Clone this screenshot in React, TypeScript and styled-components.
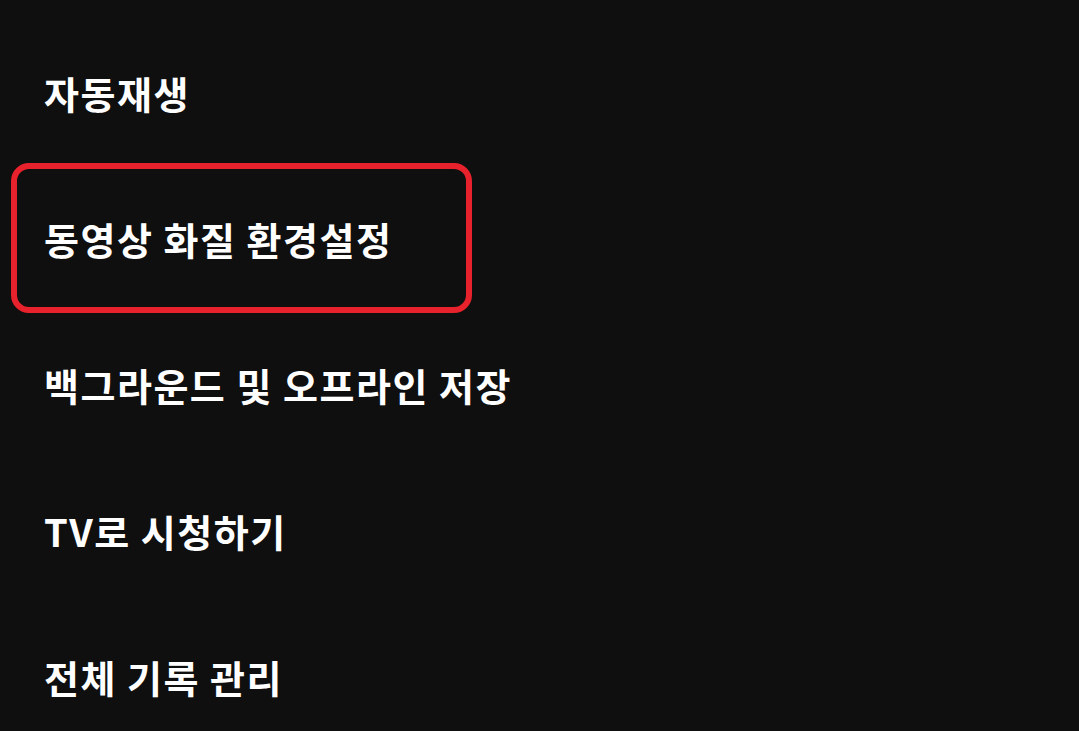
import React from 'react';
import styled, { createGlobalStyle } from 'styled-components';

const GlobalStyle = createGlobalStyle`
    html, body {
        margin: 0;
        padding: 0;
        background-color: #0f0f0f;
    }
    body {
        font-family: "Noto Sans CJK KR", "Noto Sans", sans-serif;
    }
`;

const Screen = styled.div`
    width: 1079px;
    height: 731px;
    overflow: hidden;
    background-color: #0f0f0f;
`;

const List = styled.ul`
    list-style: none;
    margin: 0;
    padding: 20px 0 0 0;
    display: flex;
    flex-direction: column;
`;

const Row = styled.li<{ $highlighted?: boolean }>`
    position: relative;
    display: flex;
    align-items: center;
    height: 146px;
    padding-left: 44px;
    &::after {
        content: '';
        display: ${(p) => (p.$highlighted ? 'block' : 'none')};
        position: absolute;
        left: 11px;
        top: -3px;
        width: 461px;
        height: 150px;
        box-sizing: border-box;
        border: 6px solid #e8222c;
        border-radius: 18px;
        pointer-events: none;
    }
`;

const Label = styled.span`
    font-size: 38px;
    font-weight: 700;
    color: #ffffff;
    letter-spacing: 1.5px;
    word-spacing: 0;
    line-height: 1;
`;

const items = [
    '자동재생',
    '동영상 화질 환경설정',
    '백그라운드 및 오프라인 저장',
    'TV로 시청하기',
    '전체 기록 관리',
];

function App() {
    return (
        <>
            <GlobalStyle />
            <Screen>
                <List>
                    {items.map((item, i) => (
                        <Row key={item} $highlighted={i === 1}>
                            <Label>{item}</Label>
                        </Row>
                    ))}
                </List>
            </Screen>
        </>
    );
}

export default App;
